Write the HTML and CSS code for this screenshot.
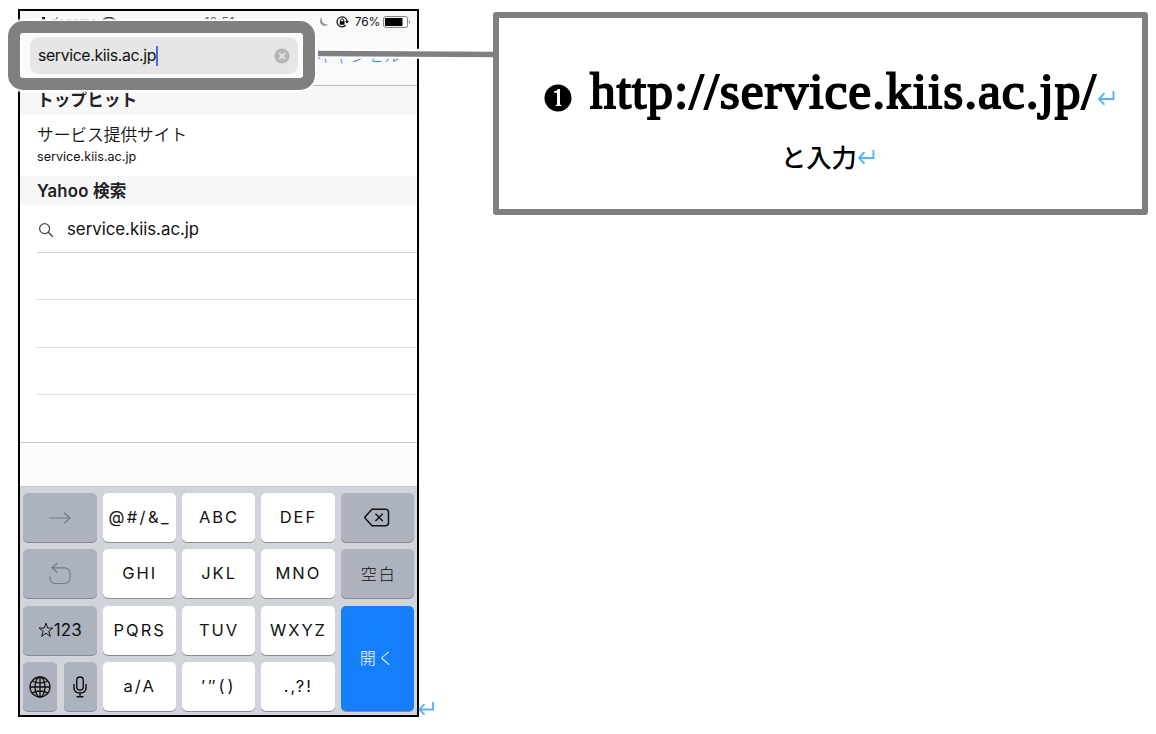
FILE: index.html
```html
<!DOCTYPE html>
<html lang="ja">
<head>
<meta charset="utf-8">
<title>service.kiis.ac.jp</title>
<link rel="stylesheet" href="styles.css">
</head>
<body>
<main class="page">
  <section class="phone">
    <header class="navbar">
      <div class="status">
        <span class="carrier">docomo</span>
        <svg class="signal" width="10" height="10" viewBox="0 0 10 10"><path d="M0 6h2v4H0zM3 3h2v7H3zM6 0h3v10H6z"/></svg>
        <svg class="wifi" width="14" height="10" viewBox="0 0 14 10"><path d="M0 4Q7-3 14 4" fill="none" stroke="#333" stroke-width="1.8"/></svg>
        <span class="clock">12:51</span>
        <svg class="moon" width="10" height="11" viewBox="0 0 10 11"><path d="M3 .8A5 5 0 1 0 9.6 8.2 5.5 5.5 0 0 1 3 .8z" fill="#999"/></svg>
        <svg class="lock" width="13" height="12" viewBox="0 0 13 12"><g fill="none" stroke="#111"><path d="M11 5.2A5 5 0 1 0 9.8 9.2" stroke-width="1.2"/><path d="M4.6 6V4.3a1.5 1.5 0 0 1 3 0V6"/></g><path d="M3.7 5.3h4.8v3.4H3.7zM9.2 5h3.6L11 7.6z"/></svg>
        <span class="percent">76%</span>
        <svg class="battery" width="28" height="12" viewBox="0 0 28 12"><rect x=".6" y=".6" width="24" height="10.8" rx="2" fill="#fff" stroke="#777"/><rect x="2" y="2" width="17.5" height="8"/><path d="M26 4q2 2 0 4z" fill="#888"/></svg>
      </div>
      <div class="cancel">キャンセル</div>
    </header>
    <h2 class="group">トップヒット</h2>
    <div class="hit">
      <div class="hit-title">サービス提供サイト</div>
      <div class="hit-url">service.kiis.ac.jp</div>
    </div>
    <h2 class="group yahoo">Yahoo 検索</h2>
    <div class="rows">
      <div class="row">
        <svg class="search" width="16" height="16" viewBox="0 0 16 16" fill="none" stroke="#444" stroke-width="1.2"><circle cx="6.6" cy="6.6" r="5"/><path d="M10.3 10.3l4.5 4.5" stroke-width="1.5"/></svg>
        <span>service.kiis.ac.jp</span>
      </div>
      <div class="row"></div>
      <div class="row"></div>
      <div class="row"></div>
      <div class="row"></div>
    </div>
    <div class="accessory"></div>
    <div class="keyboard">
      <div class="key dark"><svg width="24" height="14" viewBox="0 0 24 14" fill="none" stroke="#777b82" stroke-width="1.2"><path d="M1 7h21M16 1.5L22 7l-6 5.5"/></svg></div>
      <div class="key symbols">@#/&amp;_</div>
      <div class="key">ABC</div>
      <div class="key">DEF</div>
      <div class="key dark"><svg width="26" height="19" viewBox="0 0 26 19" fill="none" stroke="#111" stroke-width="1.5"><path d="M8 1.2h13.5a3 3 0 0 1 3 3v10.600a3 3 0 0 1-3 3H8L1.200 10.200a1 1 0 0 1 0-1.400z"/><path d="M11.500 5.800l7.200 7.200M18.700 5.800l-7.200 7.200"/></svg></div>

      <div class="key dark"><svg width="22" height="23" viewBox="0 0 22 23" fill="none" stroke="#777b82" stroke-width="1.2"><path d="M8.500 1L3 5.800l5.500 4.700M3 5.800h12.500a5.500 5.500 0 0 1 5.500 5.500v4.700a5.500 5.500 0 0 1-5.500 5.500H6.500A5.500 5.500 0 0 1 1 16v-1.500"/></svg></div>
      <div class="key">GHI</div>
      <div class="key">JKL</div>
      <div class="key">MNO</div>
      <div class="key dark space">空白</div>

      <div class="key dark numbers"><svg width="16" height="16" viewBox="0 0 15 15" fill="none" stroke="#111" stroke-width=".9"><path d="M7.500 1l1.600 4.700H14l-3.900 3 1.500 4.800-4.100-3-4.100 3 1.500-4.800L1 5.700h4.900z"/></svg>123</div>
      <div class="key">PQRS</div>
      <div class="key">TUV</div>
      <div class="key">WXYZ</div>
      <div class="key go">開く</div>

      <div class="pair">
        <div class="key dark"><svg width="22" height="22" viewBox="0 0 22 22" fill="none" stroke="#111" stroke-width="1.3"><circle cx="11" cy="11" r="10"/><ellipse cx="11" cy="11" rx="5" ry="10"/><path d="M11 1v20M1 11h20M3 5Q11 9 19 5M3 17Q11 13 19 17"/></svg></div>
        <div class="key dark"><svg width="14" height="22" viewBox="0 0 14 22" fill="none" stroke="#111" stroke-width="1.4"><rect x="3.7" y="1" width="6.6" height="13" rx="3.3"/><path d="M1 8v4q0 5 6 5t6-5V8M7 17v4M3.500 20.800h7"/></svg></div>
      </div>
      <div class="key">a/A</div>
      <div class="key quotes">′″()</div>
      <div class="key">.,?!</div>
    </div>
  </section>

  <svg class="mark" width="16" height="15" viewBox="0 0 16 15"><path d="M15 1v7.500H1.500M6.500 3L1.500 8.500l5 5.200"/></svg>

  <aside class="callout">
    <div class="line-one">
      <svg class="bullet" width="28" height="28" viewBox="0 0 28 28"><circle cx="14" cy="14" r="13.500"/><path d="M10 7.500q2.800-.3 4-2.500h2v15.500l1.500.7v.8h-6v-.8l1.500-.7V8.800h-3z" fill="#fff"/></svg>
      <span class="url">http://service.kiis.ac.jp/</span>
      <svg class="mark-inline" width="18" height="16" viewBox="0 0 16 15"><path d="M15 1v7.500H1.500M6.500 3L1.500 8.500l5 5.200"/></svg>
    </div>
    <div class="line-two">
      <span>と入力</span>
      <svg class="mark-inline" width="18" height="16" viewBox="0 0 16 15"><path d="M15 1v7.500H1.500M6.500 3L1.500 8.500l5 5.200"/></svg>
    </div>
  </aside>

  <svg class="connector" width="182" height="18" viewBox="0 0 182 18"><path d="M5 8.500L174 9" stroke="#fff" stroke-width="10"/><path d="M3 8.500L182 9.500" stroke="#808080" stroke-width="5.500"/></svg>

  <div class="highlight">
    <div class="field">
      <span class="typed">service.kiis.ac.jp</span><i class="caret"></i>
      <svg class="clear" width="16" height="16" viewBox="0 0 16 16"><circle cx="8" cy="8" r="7.600" fill="#b5b5b7"/><path d="M5 5l6 6M11 5l-6 6" stroke="#f0f0f0" stroke-width="1.400"/></svg>
    </div>
  </div>
</main>
</body>
</html>
```

FILE: styles.css
```css
* { box-sizing: border-box; }

body {
  margin: 0;
  background: #fff;
  color: #111;
  font-family: Inter, "Noto Sans CJK JP", sans-serif;
}

svg { display: block; flex: none; }

.page {
  position: relative;
  width: 1156px;
  height: 734px;
  padding: 9px 0 0 18px;
  display: flex;
  align-items: flex-start;
  overflow: hidden;
}

.phone {
  width: 401px;
  height: 708px;
  border: 2px solid #000;
  flex: none;
}

.navbar {
  height: 75px;
  background: #f9f9f9;
  border-bottom: 1px solid #b9b9bb;
}

.status {
  display: flex;
  align-items: center;
  height: 21px;
  padding: 0 6px 0 16px;
  font-size: 12px;
}
.carrier { order: 1; margin-left: 5px; color: #555; font-size: 12px; }
.signal { order: 0; }
.wifi { order: 2; margin-left: 5px; }
.clock { order: 3; margin-left: 88px; color: #555; font-size: 13px; }
.moon { order: 4; margin-left: auto; }
.lock { order: 5; margin-left: 7px; }
.percent { order: 6; margin-left: 6px; letter-spacing: -0.2px; }
.battery { order: 7; margin-left: 3px; }

.cancel {
  padding: 12px 16px 0 0;
  text-align: right;
  color: #157efb;
  font-size: 17px;
  line-height: 24px;
  font-weight: 300;
}

.group {
  margin: 0;
  height: 29px;
  padding-left: 17px;
  background: #f7f7f7;
  font-size: 16.7px;
  line-height: 29px;
  font-weight: 600;
  color: #222;
}
.yahoo { letter-spacing: 0.2px; line-height: 31px; }

.hit { height: 61px; padding: 8px 0 0 17px; }
.hit-title { font-size: 16.7px; line-height: 25px; font-weight: 350; }
.hit-url { font-size: 12.6px; line-height: 18px; }

.rows { height: 237px; }
.row {
  display: flex;
  align-items: center;
  gap: 13px;
  height: 47.5px;
  margin-left: 17px;
  padding: 1px 0 0 1px;
  border-bottom: 1px solid #e0e0e2;
  font-size: 16.8px;
}
.row:first-child { border-color: #d0d0d2; }
.search { margin-top: 3px; }

.accessory {
  height: 44px;
  border-top: 1px solid #c8cad0;
  background: #fcfcfc;
}

.keyboard {
  height: 229px;
  padding: 6px 3px 4px;
  background: #d1d4db;
  border-top: 1px solid #c5c8ce;
  display: grid;
  grid-template-columns: repeat(5, 1fr);
  grid-template-rows: repeat(4, 49px);
  gap: 7.4px 6px;
}
.key {
  display: flex;
  align-items: center;
  justify-content: center;
  min-width: 0;
  border-radius: 5px;
  background: #fff;
  box-shadow: 0 1px 0 #898b90;
  font-size: 16.5px;
  letter-spacing: 2px;
  padding: 0 0 1px 1px;
}
.dark { background: #acb3be; padding: 0; }
.symbols { letter-spacing: 2.4px; }
.quotes { letter-spacing: 3px; }
.space { font-size: 16px; font-weight: 300; padding: 0 0 1px 3px; }
.numbers { letter-spacing: 0; font-size: 17px; }
.go {
  grid-row: 3 / span 2;
  grid-column: 5;
  background: #157efb;
  color: #fff;
  font-weight: 300;
  font-size: 16px;
  padding-bottom: 2px;
}
.pair { display: grid; grid-template-columns: 34px 33px; gap: 6.5px; }

.mark, .mark-inline { fill: none; stroke: #55b0ff; stroke-width: 1.8; }
.mark { margin: 692px 1px 0 -1px; }

.callout {
  width: 655px;
  height: 203px;
  margin: 3px 0 0 58px;
  border: 6px solid #808080;
  border-radius: 3px;
  flex: none;
  padding: 40px 0 0 45px;
}
.line-one { display: flex; align-items: center; height: 70px; }
.bullet { margin-top: 9px; }
.url {
  margin: -4px 0 0 18px;
  font-family: "Liberation Serif", serif;
  font-size: 51.5px;
  line-height: 60px;
  letter-spacing: 0.95px;
  color: #000;
  -webkit-text-stroke: 1.9px #000;
}
.line-one .mark-inline { margin: 10px 0 0 0; }
.line-two {
  display: flex;
  align-items: center;
  margin: 10px 0 0 237px;
  font-family: "Noto Sans CJK JP", sans-serif;
  font-weight: 500;
  font-size: 25.3px;
  line-height: 40px;
  color: #000;
}
.line-two span { margin-top: -2px; }

.connector { position: absolute; left: 315px; top: 45px; }

.highlight {
  position: absolute;
  left: 8px;
  top: 21px;
  width: 307px;
  height: 69px;
  padding: 4px 5px 4px 10px;
  border: 12px solid #808080;
  border-radius: 15px;
  background: #fbfbfb;
  box-shadow: 0 0 2px 2px #fff, inset 0 0 3px 2px #fff;
}
.field {
  display: flex;
  align-items: center;
  height: 37px;
  padding: 0 8px 0 8px;
  border-radius: 9px;
  background: #e6e6e7;
  font-size: 15.8px;
  letter-spacing: -0.35px;
}
.typed { margin-top: -1px; }
.caret { width: 2px; height: 20px; background: #426bf2; }
.clear { margin-left: auto; }
```
